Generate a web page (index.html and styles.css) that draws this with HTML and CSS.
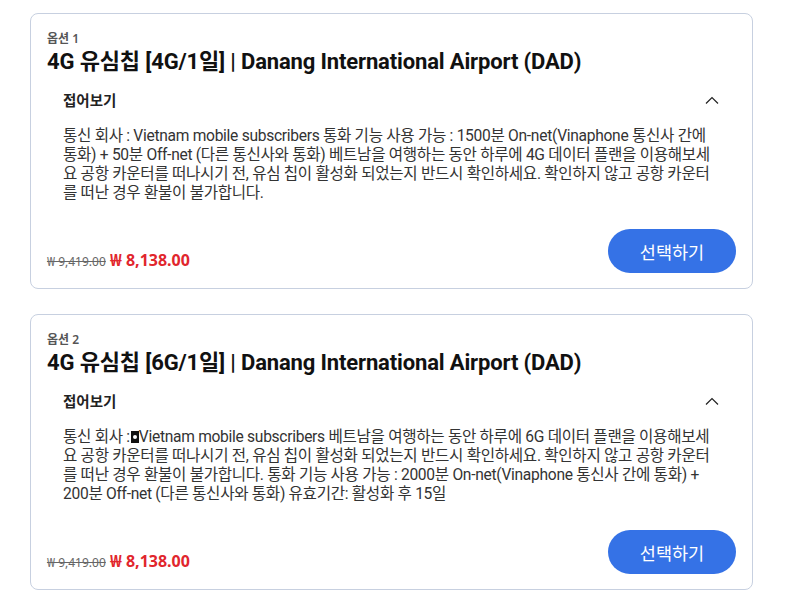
FILE: index.html
```html
<!DOCTYPE html>
<html lang="ko">
<head>
<meta charset="utf-8">
<link rel="stylesheet" href="styles.css">
</head>
<body>
<div class="list">
  <section class="card">
    <div class="label">옵션 1</div>
    <h2 class="title">4G 유심칩 [4G/1일] | Danang International Airport (DAD)</h2>
    <div class="acc-head">
      <span>접어보기</span>
      <svg class="chev" width="14" height="8" viewBox="0 0 14 8"><path d="M1 7.5 L7 1.5 L13 7.5" fill="none" stroke="#222" stroke-width="1.2"/></svg>
    </div>
    <p class="desc">통신 회사 : Vietnam mobile subscribers 통화 기능 사용 가능 : 1500분 On-net(Vinaphone 통신사 간에 통화) + 50분 Off-net (다른 통신사와 통화) 베트남을 여행하는 동안 하루에 4G 데이터 플랜을 이용해보세요 공항 카운터를 떠나시기 전, 유심 칩이 활성화 되었는지 반드시 확인하세요. 확인하지 않고 공항 카운터를 떠난 경우 환불이 불가합니다.</p>
    <div class="foot">
      <div class="price"><span class="old">₩ 9,419.00</span> <span class="new">₩ 8,138.00</span></div>
      <button class="btn">선택하기</button>
    </div>
  </section>
  <section class="card">
    <div class="label">옵션 2</div>
    <h2 class="title">4G 유심칩 [6G/1일] | Danang International Airport (DAD)</h2>
    <div class="acc-head">
      <span>접어보기</span>
      <svg class="chev" width="14" height="8" viewBox="0 0 14 8"><path d="M1 7.5 L7 1.5 L13 7.5" fill="none" stroke="#222" stroke-width="1.2"/></svg>
    </div>
    <p class="desc">통신 회사 :<span class="tofu"></span>Vietnam mobile subscribers 베트남을 여행하는 동안 하루에 6G 데이터 플랜을 이용해보세요 공항 카운터를 떠나시기 전, 유심 칩이 활성화 되었는지 반드시 확인하세요. 확인하지 않고 공항 카운터를 떠난 경우 환불이 불가합니다. 통화 기능 사용 가능 : 2000분 On-net(Vinaphone 통신사 간에 통화) + 200분 Off-net (다른 통신사와 통화) 유효기간: 활성화 후 15일</p>
    <div class="foot">
      <div class="price"><span class="old">₩ 9,419.00</span> <span class="new">₩ 8,138.00</span></div>
      <button class="btn">선택하기</button>
    </div>
  </section>
</div>
</body>
</html>
```
FILE: styles.css
```css
* { box-sizing: border-box; }
body {
  margin: 0;
  background: #fff;
  font-family: "Noto Sans", "Noto Sans CJK KR", sans-serif;
  color: #222;
}
.list {
  width: 723px;
  margin: 13px 0 0 30px;
  display: flex;
  flex-direction: column;
  gap: 25px;
}
.card {
  border: 1px solid #c7d0e0;
  border-radius: 8px;
  padding: 16px 16px 15px;
  height: 276px;
  display: flex;
  flex-direction: column;
}
.label {
  font-size: 12px;
  line-height: 18px;
  font-weight: 600;
  color: #555;
}
.title {
  margin: 0;
  font-family: Roboto, "Noto Sans CJK KR", sans-serif;
  font-size: 22px;
  letter-spacing: -0.15px;
  line-height: 28px;
  font-weight: 700;
  color: #111;
}
.acc-head {
  display: flex;
  justify-content: space-between;
  align-items: center;
  padding: 12px 17px 12px 16px;
  font-size: 14.5px;
  line-height: 24px;
  font-weight: 700;
  color: #222;
}
.chev { display: block; }
.desc {
  margin: 0;
  padding: 3px 19.5px 0 16px;
  font-family: Roboto, "Noto Sans CJK KR", sans-serif;
  font-size: 15.6px;
  letter-spacing: -0.3px;
  line-height: 19px;
  color: #333;
}
.tofu {
  display: inline-block;
  width: 8px;
  height: 12px;
  margin-left: 1px;
  background: #111;
  vertical-align: -1px;
  position: relative;
}
.tofu::after {
  content: "";
  position: absolute;
  left: 2px;
  top: 4px;
  width: 4px;
  height: 4px;
  border-radius: 50%;
  background: #fff;
}
.foot {
  margin-top: auto;
  display: flex;
  justify-content: space-between;
  align-items: flex-end;
}
.price {
  line-height: 20px;
  padding-bottom: 1px;
}
.old {
  font-size: 12px;
  color: #666;
  text-decoration: line-through;
}
.new {
  font-size: 16px;
  font-weight: 700;
  color: #e1262d;
}
.btn {
  width: 128px;
  height: 44px;
  border: none;
  border-radius: 22px;
  background: #3572e6;
  color: #fff;
  font-family: inherit;
  font-size: 17.5px;
}
```
